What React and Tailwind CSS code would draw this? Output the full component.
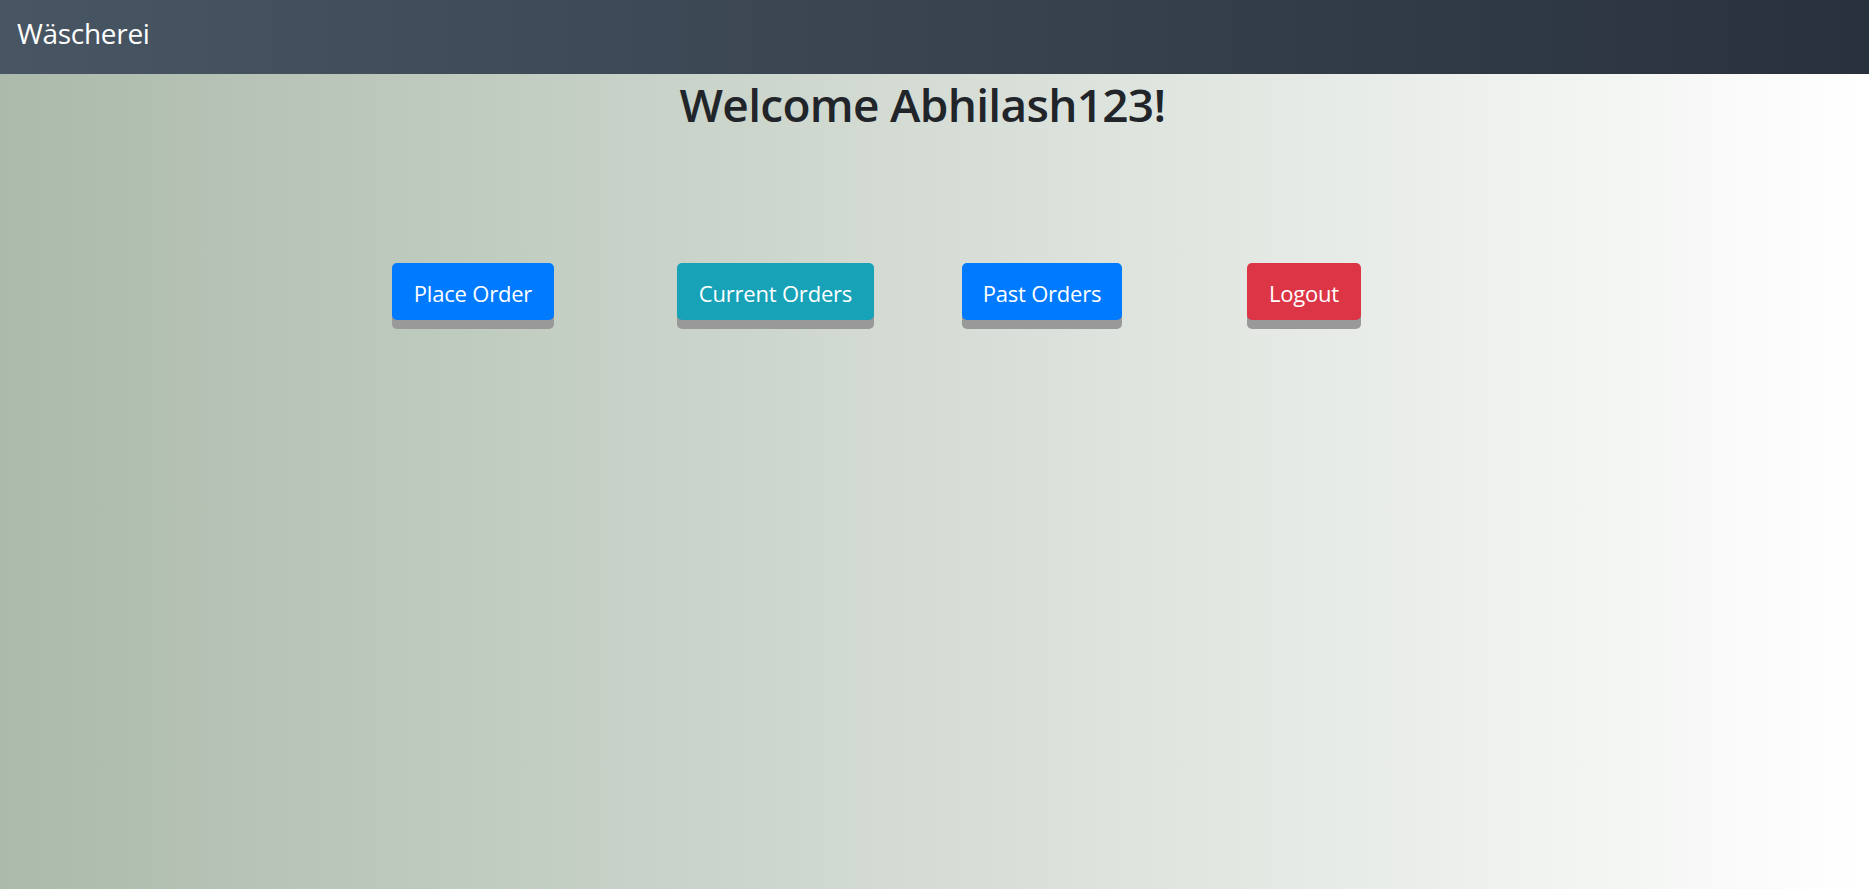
import React from 'react';

const buttons = [
  { label: 'Place Order', color: 'bg-[#007bff]', width: 'w-[162px]' },
  { label: 'Current Orders', color: 'bg-[#17a2b8]', width: 'w-[197px]' },
  { label: 'Past Orders', color: 'bg-[#007bff]', width: 'w-[160px]' },
  { label: 'Logout', color: 'bg-[#dc3545]', width: 'w-[114px]' },
];

export default function App() {
  return (
    <div className="min-h-[889px] flex flex-col bg-[linear-gradient(to_right,#abbaab,#ffffff)] font-['Open_Sans','Noto_Sans',sans-serif]">
      {/* Navbar */}
      <nav className="h-[74px] flex items-center pl-[17px] pr-4 pb-2 bg-[linear-gradient(to_right,#485563,#29323c)]">
        <span className="text-white text-[28px] tracking-[-0.3px]">Wäscherei</span>
      </nav>

      {/* Greeting */}
      <h1 className="mt-[-1px] text-center text-[#212529] text-[46px] font-semibold leading-[62px] tracking-[-0.7px] pr-[24px]">
        Welcome Abhilash123!
      </h1>

      {/* Actions */}
      <div className="flex mt-[128px] pl-[392px]">
        {buttons.map((b) => (
          <div key={b.label} className="w-[285px]">
            <button
              className={`${b.color} ${b.width} h-[57px] pt-[3px] rounded-[5px] text-white text-[22px] tracking-[-0.2px] shadow-[0_9px_0_#999999]`}
            >
              {b.label}
            </button>
          </div>
        ))}
      </div>
    </div>
  );
}
